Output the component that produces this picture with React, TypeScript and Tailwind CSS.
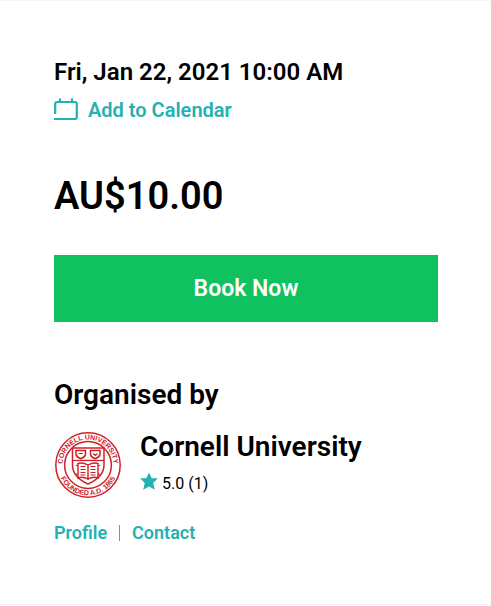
import React from 'react';

function CalendarIcon() {
  return (
    <svg viewBox="0 0 24 24" className="w-6 h-6 shrink-0" fill="none" stroke="currentColor" strokeWidth="2.2" aria-hidden="true">
      <path d="M1.2 16V6Q1.2 4 3.2 4H20.8Q22.8 4 22.8 6V19Q22.8 21 20.8 21H0" />
      <path d="M6 0.5V5M18 0.5V5" />
    </svg>
  );
}

function StarIcon() {
  return (
    <svg viewBox="0 0 18 18" className="w-[18px] h-[18px] shrink-0" fill="currentColor" aria-hidden="true">
      <path d="M9 0.5L11.7 6.3H17.8L13.2 10.9L14.8 17.8L9 14.6L3.2 17.8L4.8 10.9L0.2 6.3H6.3Z" />
    </svg>
  );
}

function UniversitySeal() {
  return (
    <svg viewBox="0 0 68 68" className="w-[68px] h-[68px] shrink-0 text-[#cf2027]" fill="none" stroke="currentColor" role="img" aria-label="Cornell University seal">
      <defs>
        <path id="seal-top" d="M9 39A25.5 25.5 0 1 1 59 39" />
        <path id="seal-bottom" d="M3.7 34A30.3 30.3 0 0 0 64.3 34" />
      </defs>
      <circle cx="34" cy="34" r="32.2" strokeWidth="1.5" />
      <circle cx="34" cy="34" r="23.4" strokeWidth="1.5" />
      <g fill="currentColor" stroke="none" className="font-['Liberation_Sans',sans-serif] font-bold text-[7px]">
        <text textAnchor="middle">
          <textPath href="#seal-top" startOffset="50%">CORNELL UNIVERSITY</textPath>
        </text>
        <text textAnchor="middle">
          <textPath href="#seal-bottom" startOffset="50%">FOUNDED A.D. 1865</textPath>
        </text>
      </g>
      <path d="M18.5 17H50V34C50 43 44 48.5 34 53C24 48.5 18.5 43 18.5 34Z" strokeWidth="1.5" />
      <path d="M18.5 29.5H50" strokeWidth="1.3" />
      <path d="M22 19.5H31.5V23.5Q31 26 26.8 27.8Q22.5 26 22 23.5Z" strokeWidth="1.5" />
      <path d="M36.5 19.5H46V23.5Q45.5 26 41.2 27.8Q37 26 36.5 23.5Z" strokeWidth="1.5" />
      <path d="M24.5 22.5H29M39 22.5L41.2 24.5L43.5 22.5" strokeWidth="1.2" />
      <path d="M34 34Q28.5 31 24 32.5V47Q29 45 34 48Q39 45 44 47V32.5Q39.5 31 34 34V49" strokeWidth="1.4" />
      <path d="M26.5 35.5H31.5M26.5 38.5H31.5M26.5 41.5H31.5M26.5 44H31.5M36.5 35.5H41.5M36.5 38.5H41.5M36.5 41.5H41.5M36.5 44H41.5M22 34.5H24M22 43H24M44 34.5H46M44 43H46" strokeWidth="1.2" />
    </svg>
  );
}

export default function App() {
  return (
    <main className="bg-white text-black font-['Roboto',sans-serif] border-y border-[#f5f5f5] pt-[55px] pb-[57px] pl-[54px] pr-[53px]">
      <section>
        <p className="text-2xl leading-8 font-semibold">Fri, Jan 22, 2021 10:00 AM</p>
        <a href="#calendar" className="mt-2 flex items-center gap-[10px] text-xl leading-7 font-semibold text-[#23b1b1]">
          <CalendarIcon />
          Add to Calendar
        </a>
        <p className="mt-12 text-[38px] leading-[48px] font-semibold">AU$10.00</p>
        <button type="button" className="mt-[35px] w-full h-[67px] pt-px bg-[#10c25f] text-white text-[23px] font-semibold">
          Book Now
        </button>
      </section>

      <section className="mt-[57px]">
        <h2 className="text-[28px] leading-8 font-semibold">Organised by</h2>
        <div className="mt-5 flex items-center gap-[18px]">
          <UniversitySeal />
          <div>
            <h3 className="text-[28px] leading-8 font-semibold">Cornell University</h3>
            <div className="mt-[9px] mb-[3px] flex items-start gap-1 text-base leading-6">
              <span className="text-[#23b1b1]"><StarIcon /></span>
              5.0 (1)
            </div>
          </div>
        </div>
        <nav className="mt-5 flex items-center gap-3 text-lg leading-7 font-semibold text-[#23b1b1]">
          <a href="#profile">Profile</a>
          <span className="w-px h-4 bg-[#8c8c8c]" />
          <a href="#contact">Contact</a>
        </nav>
      </section>
    </main>
  );
}
